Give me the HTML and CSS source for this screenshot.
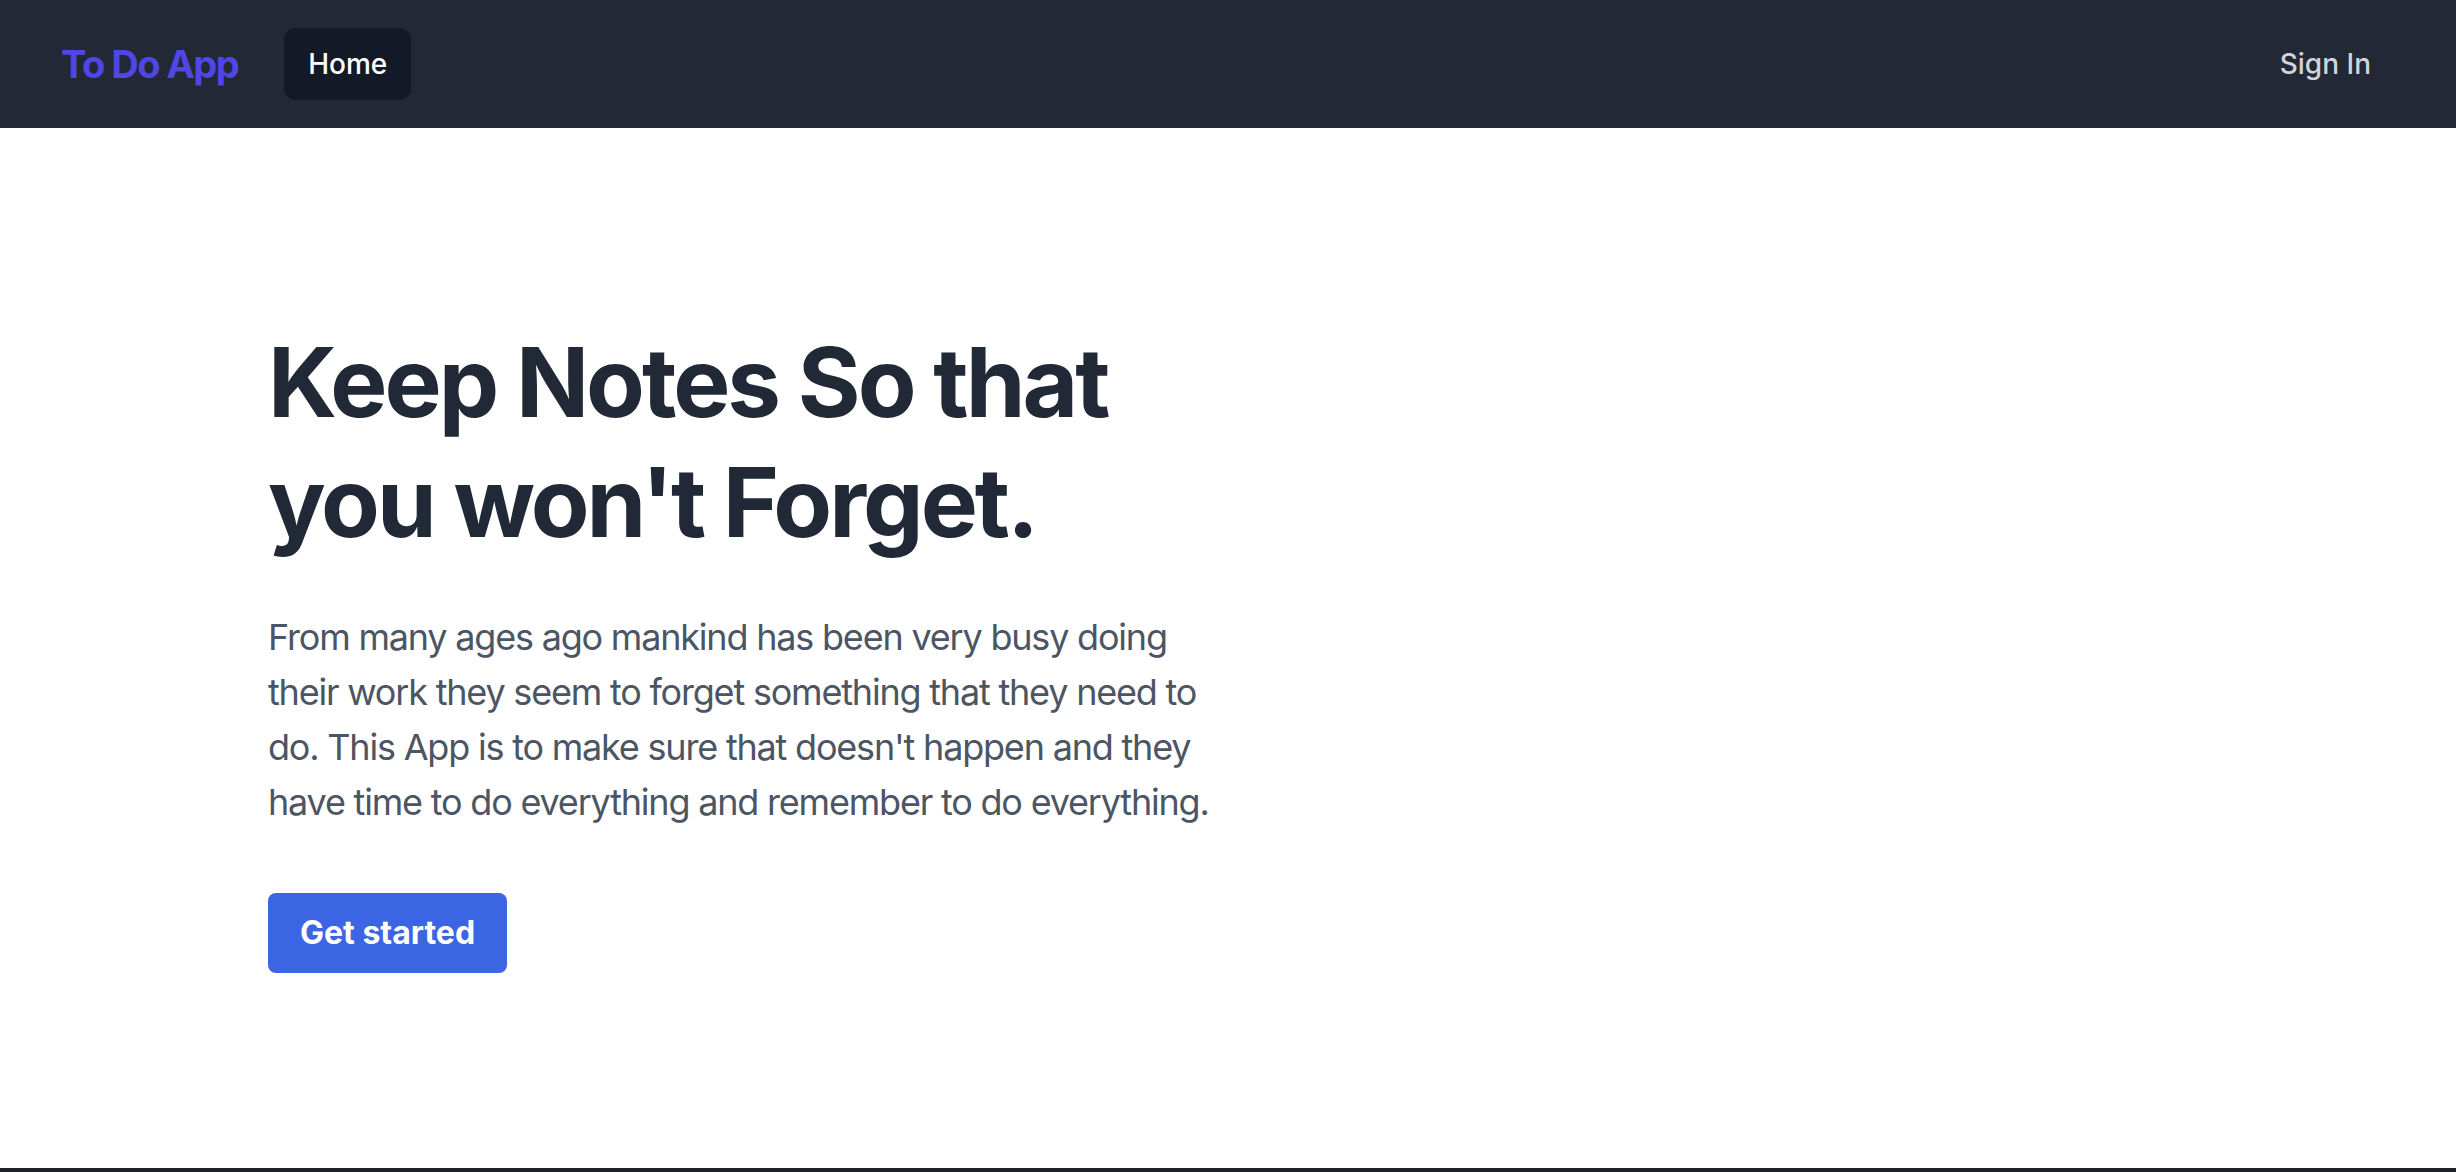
FILE: index.html
```html
<!DOCTYPE html>
<html lang="en">
<head>
<meta charset="utf-8">
<title>To Do App</title>
<link rel="stylesheet" href="styles.css">
</head>
<body>
<nav class="navbar">
  <div class="nav-left">
    <a class="brand" href="#">To Do App</a>
    <a class="nav-link active" href="#">Home</a>
  </div>
  <a class="nav-link signin" href="#">Sign In</a>
</nav>
<main class="hero">
  <div class="hero-content">
    <h1 class="hero-title">Keep Notes So that you won't Forget.</h1>
    <p class="hero-text">From many ages ago mankind has been very busy doing their work they seem to forget something that they need to do. This App is to make sure that doesn't happen and they have time to do everything and remember to do everything.</p>
    <a class="btn-primary" href="#">Get started</a>
  </div>
</main>
<footer class="footer"></footer>
</body>
</html>
```

FILE: styles.css
```css
* { box-sizing: border-box; }
html, body { margin: 0; padding: 0; }
body {
  font-family: Inter, "Noto Sans", "Liberation Sans", sans-serif;
  background: #ffffff;
  color: #1f2937;
}
a { text-decoration: none; }

.navbar {
  height: 128px;
  background: #222836;
  display: flex;
  align-items: center;
  justify-content: space-between;
  padding: 0 61px 0 61px;
}
.nav-left {
  display: flex;
  align-items: center;
}
.brand {
  font-size: 38px;
  line-height: 56px;
  font-weight: 700;
  color: #4f46e5;
  letter-spacing: -1.5px;
  margin-right: 46px;
}
.nav-link {
  display: block;
  font-size: 28px;
  line-height: 40px;
  font-weight: 500;
  padding: 16px 24px;
  border-radius: 12px;
  color: #d1d5db;
}
.nav-link.active {
  background: #131927;
  color: #ffffff;
}

.hero {
  height: 1040px;
  padding: 194px 0 0 268px;
}
.hero-content {
  width: 975px;
}
.hero-title {
  margin: 0;
  font-size: 96px;
  line-height: 120px;
  font-weight: 700;
  color: #222936;
  letter-spacing: -3px;
}
.hero-text {
  margin: 48px 0 0;
  font-size: 36px;
  line-height: 55px;
  color: #4b5563;
  letter-spacing: -1.2px;
}
.btn-primary {
  display: inline-block;
  margin-top: 63px;
  padding: 16px 32px;
  font-size: 32px;
  line-height: 48px;
  font-weight: 700;
  color: #ffffff;
  background: #3b65e3;
  border-radius: 8px;
}
.footer {
  height: 40px;
  background: #1f2329;
}
```
